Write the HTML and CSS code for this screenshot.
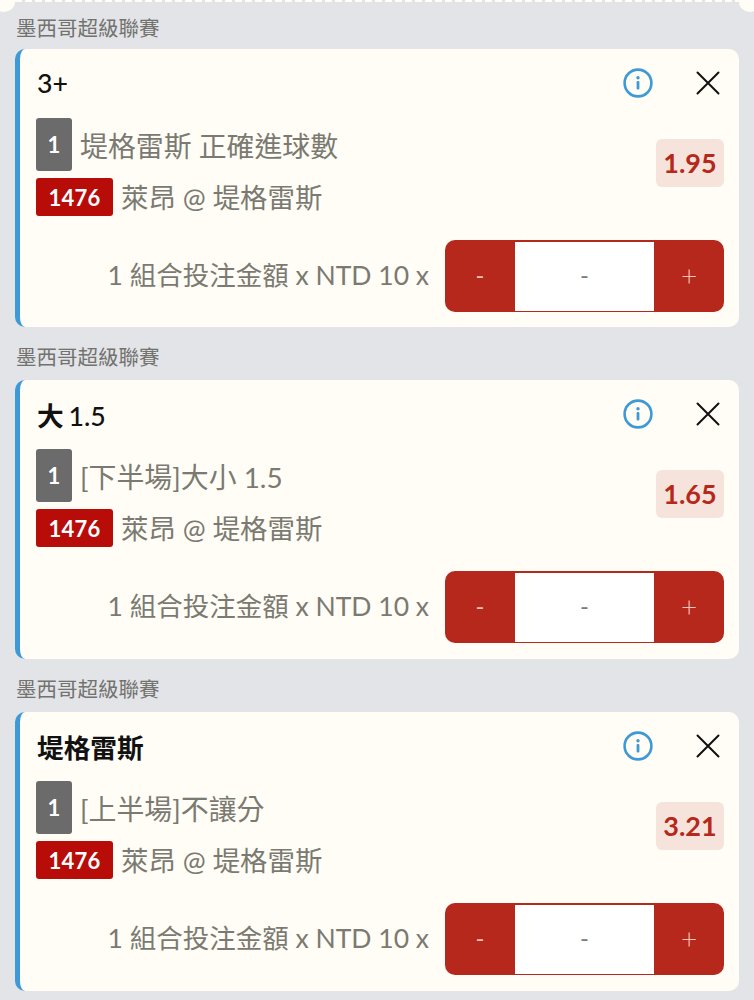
FILE: index.html
```html
<!DOCTYPE html>
<html lang="zh-Hant">
<head>
<meta charset="utf-8">
<title>投注單</title>
<link rel="stylesheet" href="styles.css">
</head>
<body>
<div class="tear"><span class="scallop scallop-l"></span><span class="scallop scallop-r"></span></div>
<main class="list">
  <section class="group">
    <h2 class="league">墨西哥超級聯賽</h2>
    <article class="card">
      <div class="head">
        <div class="title">3+</div>
        <svg class="info" viewBox="0 0 30 30"><circle cx="15" cy="15" r="13.4" fill="none" stroke="#3d9ad6" stroke-width="2.6"/><circle cx="15" cy="9.7" r="1.7" fill="#3d9ad6"/><rect x="13.6" y="13" width="2.8" height="8.6" rx="1" fill="#3d9ad6"/></svg>
        <svg class="close" viewBox="0 0 24 24"><path d="M1.5 1.5 L22.5 22.5 M22.5 1.5 L1.5 22.5" stroke="#111" stroke-width="2" stroke-linecap="round"/></svg>
      </div>
      <div class="body">
        <div class="lines">
          <div class="line line-market"><span class="tag tag-grey">1</span><span class="text">堤格雷斯 正確進球數</span></div>
          <div class="line line-match"><span class="tag tag-red">1476</span><span class="text">萊昂 @ 堤格雷斯</span></div>
        </div>
        <div class="odds">1.95</div>
      </div>
      <div class="foot">
        <span class="stake">1 組合投注金額 x NTD 10 x</span>
        <div class="stepper"><span class="step step-minus">-</span><span class="qty">-</span><span class="step step-plus">+</span></div>
      </div>
    </article>
  </section>
  <section class="group">
    <h2 class="league">墨西哥超級聯賽</h2>
    <article class="card">
      <div class="head">
        <div class="title"><span class="cjk">大</span> 1.5</div>
        <svg class="info" viewBox="0 0 30 30"><circle cx="15" cy="15" r="13.4" fill="none" stroke="#3d9ad6" stroke-width="2.6"/><circle cx="15" cy="9.7" r="1.7" fill="#3d9ad6"/><rect x="13.6" y="13" width="2.8" height="8.6" rx="1" fill="#3d9ad6"/></svg>
        <svg class="close" viewBox="0 0 24 24"><path d="M1.5 1.5 L22.5 22.5 M22.5 1.5 L1.5 22.5" stroke="#111" stroke-width="2" stroke-linecap="round"/></svg>
      </div>
      <div class="body">
        <div class="lines">
          <div class="line line-market"><span class="tag tag-grey">1</span><span class="text">[下半場]大小 1.5</span></div>
          <div class="line line-match"><span class="tag tag-red">1476</span><span class="text">萊昂 @ 堤格雷斯</span></div>
        </div>
        <div class="odds">1.65</div>
      </div>
      <div class="foot">
        <span class="stake">1 組合投注金額 x NTD 10 x</span>
        <div class="stepper"><span class="step step-minus">-</span><span class="qty">-</span><span class="step step-plus">+</span></div>
      </div>
    </article>
  </section>
  <section class="group">
    <h2 class="league">墨西哥超級聯賽</h2>
    <article class="card">
      <div class="head">
        <div class="title"><span class="cjk">堤格雷斯</span></div>
        <svg class="info" viewBox="0 0 30 30"><circle cx="15" cy="15" r="13.4" fill="none" stroke="#3d9ad6" stroke-width="2.6"/><circle cx="15" cy="9.7" r="1.7" fill="#3d9ad6"/><rect x="13.6" y="13" width="2.8" height="8.6" rx="1" fill="#3d9ad6"/></svg>
        <svg class="close" viewBox="0 0 24 24"><path d="M1.5 1.5 L22.5 22.5 M22.5 1.5 L1.5 22.5" stroke="#111" stroke-width="2" stroke-linecap="round"/></svg>
      </div>
      <div class="body">
        <div class="lines">
          <div class="line line-market"><span class="tag tag-grey">1</span><span class="text">[上半場]不讓分</span></div>
          <div class="line line-match"><span class="tag tag-red">1476</span><span class="text">萊昂 @ 堤格雷斯</span></div>
        </div>
        <div class="odds">3.21</div>
      </div>
      <div class="foot">
        <span class="stake">1 組合投注金額 x NTD 10 x</span>
        <div class="stepper"><span class="step step-minus">-</span><span class="qty">-</span><span class="step step-plus">+</span></div>
      </div>
    </article>
  </section>
</main>
</body>
</html>
```
FILE: styles.css
```css
* { box-sizing: border-box; }
html, body { margin: 0; height: 1000px; overflow: hidden; }
body {
  background: #e2e4e8;
  font-family: Lato, "Noto Sans CJK TC", sans-serif;
  position: relative;
}
.tear {
  height: 2px;
  margin: 0 15px;
  background: repeating-linear-gradient(90deg, #fffdf5 0 7px, transparent 7px 10px);
}
.scallop {
  position: absolute;
  top: -8px;
  width: 22px;
  height: 20px;
  border-radius: 50%;
  background: #fffdf5;
}
.scallop-l { left: -7px; }
.scallop-r { right: -7px; }
.list { display: flex; flex-direction: column; padding: 0 15px; }
.group { display: flex; flex-direction: column; }
.league {
  margin: 0;
  height: 53px;
  padding-top: 16px;
  padding-left: 1px;
  font-size: 20.5px;
  line-height: 28px;
  font-weight: 400;
  color: #72726f;
}
.group:first-child .league { height: 47px; padding-top: 12px; }
.card {
  height: 279px;
  background: #fffdf5;
  border-left: 5px solid #3d9ad6;
  border-radius: 10px;
  padding: 0 15px 0 16px;
  display: flex;
  flex-direction: column;
}
.group:first-child .card { height: 278px; }
.head { display: flex; align-items: center; height: 68px; margin-bottom: 1px; }
.title { flex: 1; font-size: 26.7px; font-weight: 500; word-spacing: -2px; color: #111; padding-left: 1px; }
.cjk { font-weight: 700; }
.info { width: 30px; height: 30px; margin-right: 43.5px; }
.close { width: 24px; height: 24px; margin-right: 4px; }
.body { display: flex; align-items: center; justify-content: space-between; }
.lines { display: flex; flex-direction: column; gap: 7px; }
.line { display: flex; align-items: center; gap: 8px; }
.tag {
  display: flex;
  align-items: center;
  justify-content: center;
  color: #fff;
  font-weight: 700;
  border-radius: 3px;
}
.tag-grey { width: 36px; height: 53px; background: #6b6b6b; font-size: 22px; }
.tag-red { width: 77px; height: 38px; background: #b80c09; font-size: 22px; letter-spacing: 0.3px; }
.text { line-height: 36px; padding-top: 2px; color: #7a7a72; }
.line-market .text { font-size: 27.9px; }
.line-match .text { font-size: 27.4px; }
.odds {
  width: 68px;
  height: 48px;
  margin-top: -9px;
  background: #f6e4dc;
  border-radius: 6px;
  display: flex;
  align-items: center;
  justify-content: center;
  color: #b5281b;
  font-size: 27px;
  font-weight: 700;
}
.foot {
  display: flex;
  align-items: center;
  justify-content: flex-end;
  gap: 16px;
  margin-top: 24px;
}
.stake { font-size: 26.5px; color: #7a7a72; padding-bottom: 6px; }
.stepper {
  width: 279px;
  height: 72px;
  display: flex;
  background: #b5281b;
  border-radius: 10px;
  overflow: hidden;
  font-size: 24px;
}
.step {
  flex: 0 0 70px;
  display: flex;
  align-items: center;
  justify-content: center;
  color: #f6c4b8;
  padding-bottom: 3px;
}
.step-plus { font-size: 28px; font-weight: 300; }
.qty {
  flex: 1;
  margin: 1.5px 0;
  background: #fff;
  display: flex;
  align-items: center;
  justify-content: center;
  color: #7a7a7a;
  padding-bottom: 3px;
}
```
